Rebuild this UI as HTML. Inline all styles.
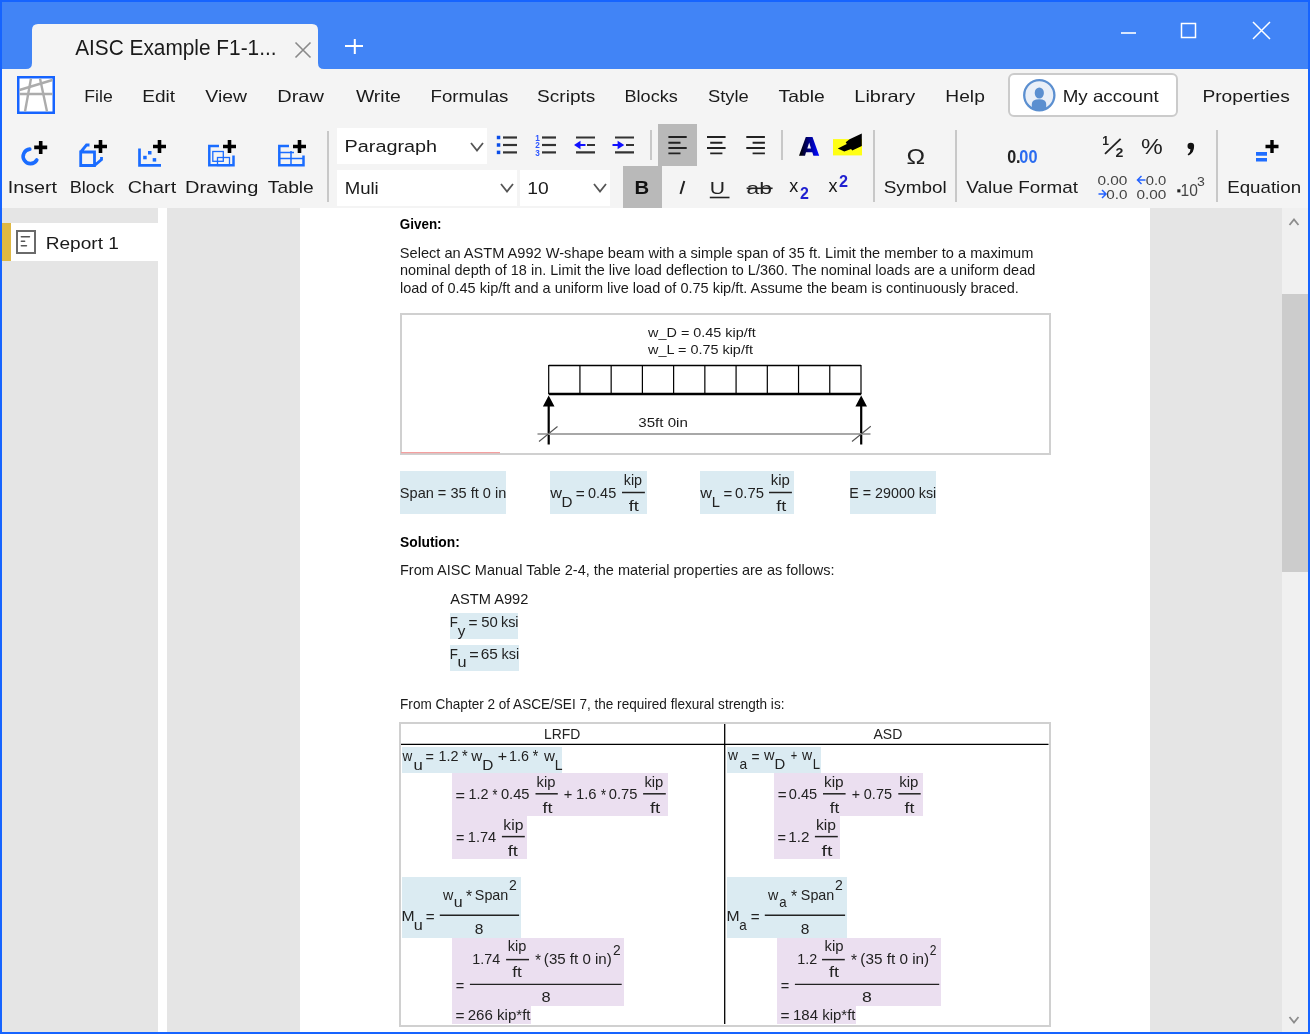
<!DOCTYPE html>
<html><head><meta charset="utf-8"><title>AISC Example F1-1</title>
<style>
html,body{margin:0;padding:0}
body{width:1310px;height:1034px;overflow:hidden;background:#1664ff;position:relative;font-family:"Liberation Sans",sans-serif}
.a{position:absolute;box-sizing:content-box}
svg{position:absolute;left:0;top:0;will-change:transform}
text{font-family:"Liberation Sans",sans-serif}
</style></head><body>
<div class="a" style="left:2px;top:2px;width:1306px;height:67px;background:#4184f6;"></div>
<div class="a" style="left:2px;top:69px;width:1306px;height:139px;background:#f4f4f4;"></div>
<div class="a" style="left:2px;top:208px;width:1306px;height:824px;background:#e5e5e5;"></div>
<div class="a" style="left:158px;top:208px;width:9px;height:824px;background:#ffffff;"></div>
<div class="a" style="left:300px;top:208px;width:850px;height:824px;background:#ffffff;"></div>
<div class="a" style="left:1282px;top:208px;width:26px;height:824px;background:#f0f0f0;"></div>
<div class="a" style="left:1282px;top:294px;width:26px;height:278px;background:#cccccc;"></div>
<div class="a" style="left:1008px;top:73px;width:166px;height:40px;border:2px solid #cbcbcb;border-radius:6px;background:#fff"></div>
<div class="a" style="left:327px;top:131px;width:2px;height:71px;background:#c8c8c8;"></div>
<div class="a" style="left:650px;top:130px;width:2px;height:30px;background:#c8c8c8;"></div>
<div class="a" style="left:781px;top:130px;width:2px;height:30px;background:#c8c8c8;"></div>
<div class="a" style="left:873px;top:130px;width:2px;height:72px;background:#c8c8c8;"></div>
<div class="a" style="left:955px;top:130px;width:2px;height:72px;background:#c8c8c8;"></div>
<div class="a" style="left:1216px;top:130px;width:2px;height:72px;background:#c8c8c8;"></div>
<div class="a" style="left:337px;top:128px;width:150px;height:36px;background:#ffffff;"></div>
<div class="a" style="left:337px;top:170px;width:180px;height:36px;background:#ffffff;"></div>
<div class="a" style="left:520px;top:170px;width:90px;height:36px;background:#ffffff;"></div>
<div class="a" style="left:658px;top:124px;width:39px;height:42px;background:#b9b9b9;"></div>
<div class="a" style="left:623px;top:166px;width:39px;height:42px;background:#b9b9b9;"></div>
<div class="a" style="left:2px;top:223px;width:156px;height:38px;background:#ffffff;"></div>
<div class="a" style="left:2px;top:223px;width:9px;height:38px;background:#dfb843;"></div>
<div class="a" style="left:400px;top:313px;width:647px;height:138px;border:2px solid #d0d0d0;background:#fff"></div>
<div class="a" style="left:400px;top:471px;width:106px;height:43px;background:#dbebf2;"></div>
<div class="a" style="left:550px;top:471px;width:97px;height:43px;background:#dbebf2;"></div>
<div class="a" style="left:700px;top:471px;width:94px;height:43px;background:#dbebf2;"></div>
<div class="a" style="left:850px;top:471px;width:86px;height:43px;background:#dbebf2;"></div>
<div class="a" style="left:450px;top:613px;width:68px;height:26px;background:#dbebf2;"></div>
<div class="a" style="left:450px;top:645px;width:69px;height:26px;background:#dbebf2;"></div>
<div class="a" style="left:399px;top:722px;width:648px;height:301px;border:2px solid #d0d0d0;background:#fff"></div>
<div class="a" style="left:402px;top:747px;width:160px;height:26px;background:#dbebf2;"></div>
<div class="a" style="left:452px;top:773px;width:216px;height:43px;background:#ebdff0;"></div>
<div class="a" style="left:452px;top:816px;width:75px;height:43px;background:#ebdff0;"></div>
<div class="a" style="left:727px;top:747px;width:94px;height:26px;background:#dbebf2;"></div>
<div class="a" style="left:774px;top:773px;width:149px;height:43px;background:#ebdff0;"></div>
<div class="a" style="left:774px;top:816px;width:66px;height:43px;background:#ebdff0;"></div>
<div class="a" style="left:402px;top:877px;width:119px;height:61px;background:#dbebf2;"></div>
<div class="a" style="left:727px;top:877px;width:120px;height:61px;background:#dbebf2;"></div>
<div class="a" style="left:452px;top:938px;width:172px;height:68px;background:#ebdff0;"></div>
<div class="a" style="left:452px;top:1006px;width:79px;height:18px;background:#ebdff0;"></div>
<div class="a" style="left:777px;top:938px;width:164px;height:68px;background:#ebdff0;"></div>
<div class="a" style="left:777px;top:1006px;width:79px;height:18px;background:#ebdff0;"></div>
<svg width="1310" height="1034" viewBox="0 0 1310 1034">
<path d="M26,69 Q32,69 32,63 L32,30 Q32,24 38,24 L312,24 Q318,24 318,30 L318,63 Q318,69 324,69 Z" fill="#f4f4f4"/>
<text x="75.16" y="55.00" font-size="21.5" fill="#1a1a1a" textLength="201.34" lengthAdjust="spacingAndGlyphs">AISC Example F1-1...</text>
<path d="M295.5,42.5 L310.5,57.5 M310.5,42.5 L295.5,57.5" stroke="#8a8a8a" stroke-width="1.6" fill="none"/>
<path d="M345,46 L363,46 M354.8,39 L354.8,54" stroke="#ffffff" stroke-width="2" fill="none"/>
<path d="M1121,33 L1136,33" stroke="#fff" stroke-width="1.6"/>
<rect x="1181.5" y="23.5" width="14" height="14" stroke="#fff" stroke-width="1.5" fill="none"/>
<path d="M1253,22 L1270,39 M1270,22 L1253,39" stroke="#fff" stroke-width="1.5" fill="none"/>
<rect x="18.25" y="77.25" width="35.5" height="35.5" fill="#ffffff" stroke="#1664ff" stroke-width="2.5"/>
<g stroke="#acacac" stroke-width="2.4" fill="none"><path d="M19.5,90 L52.5,80"/><path d="M19.5,94 L52.5,94"/><path d="M31,78.5 L25,111.5"/><path d="M40,78.5 L47,111.5"/></g>
<text x="84.35" y="102.00" font-size="16.5" fill="#1a1a1a" textLength="28.43" lengthAdjust="spacingAndGlyphs">File</text>
<text x="142.34" y="102.00" font-size="16.5" fill="#1a1a1a" textLength="32.80" lengthAdjust="spacingAndGlyphs">Edit</text>
<text x="205.32" y="102.00" font-size="16.5" fill="#1a1a1a" textLength="41.64" lengthAdjust="spacingAndGlyphs">View</text>
<text x="277.26" y="102.00" font-size="16.5" fill="#1a1a1a" textLength="46.69" lengthAdjust="spacingAndGlyphs">Draw</text>
<text x="355.92" y="102.00" font-size="16.5" fill="#1a1a1a" textLength="44.94" lengthAdjust="spacingAndGlyphs">Write</text>
<text x="430.57" y="102.00" font-size="16.5" fill="#1a1a1a" textLength="77.81" lengthAdjust="spacingAndGlyphs">Formulas</text>
<text x="537.14" y="102.00" font-size="16.5" fill="#1a1a1a" textLength="58.15" lengthAdjust="spacingAndGlyphs">Scripts</text>
<text x="624.52" y="102.00" font-size="16.5" fill="#1a1a1a" textLength="53.24" lengthAdjust="spacingAndGlyphs">Blocks</text>
<text x="707.97" y="102.00" font-size="16.5" fill="#1a1a1a" textLength="40.85" lengthAdjust="spacingAndGlyphs">Style</text>
<text x="778.58" y="102.00" font-size="16.5" fill="#1a1a1a" textLength="46.24" lengthAdjust="spacingAndGlyphs">Table</text>
<text x="854.37" y="102.00" font-size="16.5" fill="#1a1a1a" textLength="60.77" lengthAdjust="spacingAndGlyphs">Library</text>
<text x="945.33" y="102.00" font-size="16.5" fill="#1a1a1a" textLength="39.48" lengthAdjust="spacingAndGlyphs">Help</text>
<text x="1202.43" y="102.00" font-size="16.5" fill="#1a1a1a" textLength="87.37" lengthAdjust="spacingAndGlyphs">Properties</text>
<clipPath id="avc"><circle cx="1039.3" cy="95.2" r="15"/></clipPath>
<circle cx="1039.3" cy="95.2" r="15.1" fill="#e9eff8" stroke="#5b8fd0" stroke-width="2.3"/>
<g clip-path="url(#avc)" fill="#5b8fd0"><ellipse cx="1039.3" cy="93" rx="4.6" ry="5.5"/><path d="M1031.8,112 L1031.8,104 Q1031.8,99.2 1039.3,99.2 Q1046.2,99.2 1046.2,104 L1046.2,112 Z"/></g>
<text x="1062.66" y="102.00" font-size="16.5" fill="#1a1a1a" textLength="95.98" lengthAdjust="spacingAndGlyphs">My account</text>
<text x="7.67" y="193.00" font-size="17" fill="#1a1a1a" textLength="49.47" lengthAdjust="spacingAndGlyphs">Insert</text>
<text x="69.82" y="193.00" font-size="17" fill="#1a1a1a" textLength="44.15" lengthAdjust="spacingAndGlyphs">Block</text>
<text x="127.80" y="193.00" font-size="17" fill="#1a1a1a" textLength="48.35" lengthAdjust="spacingAndGlyphs">Chart</text>
<text x="184.96" y="193.00" font-size="17" fill="#1a1a1a" textLength="73.33" lengthAdjust="spacingAndGlyphs">Drawing</text>
<text x="267.89" y="193.00" font-size="17" fill="#1a1a1a" textLength="45.93" lengthAdjust="spacingAndGlyphs">Table</text>
<text x="883.74" y="193.00" font-size="17" fill="#1a1a1a" textLength="63.02" lengthAdjust="spacingAndGlyphs">Symbol</text>
<text x="966.32" y="193.00" font-size="17" fill="#1a1a1a" textLength="111.72" lengthAdjust="spacingAndGlyphs">Value Format</text>
<text x="1227.16" y="193.00" font-size="17" fill="#1a1a1a" textLength="73.95" lengthAdjust="spacingAndGlyphs">Equation</text>
<text x="344.57" y="152.00" font-size="16.3" fill="#1a1a1a" textLength="92.51" lengthAdjust="spacingAndGlyphs">Paragraph</text>
<text x="344.68" y="194.00" font-size="16.5" fill="#1a1a1a" textLength="34.08" lengthAdjust="spacingAndGlyphs">Muli</text>
<text x="527.33" y="193.80" font-size="16.5" fill="#1a1a1a" textLength="21.42" lengthAdjust="spacingAndGlyphs">10</text>
<path d="M471,143 L477,150.5 L483,143" stroke="#555" stroke-width="1.8" fill="none"/>
<path d="M501,184 L507,191.5 L513,184" stroke="#555" stroke-width="1.8" fill="none"/>
<path d="M594,184 L600,191.5 L606,184" stroke="#555" stroke-width="1.8" fill="none"/>
<rect x="17" y="231" width="18" height="22" fill="none" stroke="#6a6a6a" stroke-width="2"/>
<g stroke="#555" stroke-width="1.4" stroke-linecap="round"><path d="M21.3,236.7 L29.5,236.7"/><path d="M21.3,241.3 L24.7,241.3"/><path d="M21.3,245.7 L26.5,245.7"/></g>
<text x="45.73" y="249.00" font-size="17" fill="#1a1a1a" textLength="73.20" lengthAdjust="spacingAndGlyphs">Report 1</text>
<text x="399.85" y="228.80" font-size="14" font-weight="bold" fill="#000" textLength="41.74" lengthAdjust="spacingAndGlyphs">Given:</text>
<text x="399.84" y="257.70" font-size="14.5" fill="#1a1a1a" textLength="633.52" lengthAdjust="spacingAndGlyphs">Select an ASTM A992 W-shape beam with a simple span of 35 ft. Limit the member to a maximum</text>
<text x="399.94" y="275.10" font-size="14.5" fill="#1a1a1a" textLength="635.29" lengthAdjust="spacingAndGlyphs">nominal depth of 18 in. Limit the live load deflection to L/360. The nominal loads are a uniform dead</text>
<text x="399.92" y="292.50" font-size="14.5" fill="#1a1a1a" textLength="619.00" lengthAdjust="spacingAndGlyphs">load of 0.45 kip/ft and a uniform live load of 0.75 kip/ft. Assume the beam is continuously braced.</text>
<text x="400.00" y="546.80" font-size="14" font-weight="bold" fill="#000" textLength="59.83" lengthAdjust="spacingAndGlyphs">Solution:</text>
<text x="400.02" y="575.20" font-size="14.5" fill="#1a1a1a" textLength="434.50" lengthAdjust="spacingAndGlyphs">From AISC Manual Table 2-4, the material properties are as follows:</text>
<text x="450.27" y="603.90" font-size="14.5" fill="#1a1a1a" textLength="78.06" lengthAdjust="spacingAndGlyphs">ASTM A992</text>
<text x="400.09" y="708.60" font-size="14.5" fill="#1a1a1a" textLength="384.35" lengthAdjust="spacingAndGlyphs">From Chapter 2 of ASCE/SEI 7, the required flexural strength is:</text>
<path d="M29.8,149.1 A7.3,7.3 0 1 0 36.8,160" stroke="#1a6cff" stroke-width="3.6" fill="none" stroke-linecap="round"/>
<path d="M34.2,147.4 L47.2,147.4 M40.7,140.9 L40.7,153.9" stroke="#000" stroke-width="3.6" fill="none"/>
<path d="M80.7,165.5 L80.7,152 L94.5,152 L94.5,165.5 Z M80.7,152 L86.5,145 L89.5,145 M94.5,165.5 L101.5,159.5 L101.5,157" stroke="#1a6cff" stroke-width="2.8" fill="none" stroke-linejoin="miter"/>
<path d="M94.0,146.5 L107.0,146.5 M100.5,140.0 L100.5,153.0" stroke="#000" stroke-width="3.6" fill="none"/>
<path d="M139.5,148.5 L139.5,165.4 L161,165.4" stroke="#1a6cff" stroke-width="2.7" fill="none"/>
<rect x="143.2" y="155.8" width="3.5" height="3.5" fill="#1a6cff"/><rect x="148" y="151" width="3.5" height="3.5" fill="#1a6cff"/><rect x="152.7" y="158.1" width="3.5" height="3.5" fill="#1a6cff"/>
<path d="M153.0,146.5 L166.0,146.5 M159.5,140.0 L159.5,153.0" stroke="#000" stroke-width="3.6" fill="none"/>
<path d="M219,146 L209.3,146 L209.3,165.3 L233.5,165.3 L233.5,155.6" stroke="#1a6cff" stroke-width="2.5" fill="none"/>
<rect x="212.8" y="151.5" width="10.5" height="9.8" stroke="#1a6cff" stroke-width="1.3" fill="none"/><rect x="217.5" y="157.5" width="12" height="8" stroke="#1a6cff" stroke-width="1.3" fill="none"/>
<path d="M223.0,146.5 L236.0,146.5 M229.5,140.0 L229.5,153.0" stroke="#000" stroke-width="3.6" fill="none"/>
<path d="M289,146 L279.3,146 L279.3,165.3 L303.5,165.3 L303.5,155.6" stroke="#1a6cff" stroke-width="2.5" fill="none"/>
<path d="M280,152.6 L294,152.6 M280,158.4 L303,158.4 M291,151 L291,165" stroke="#1a6cff" stroke-width="1.5" fill="none"/>
<path d="M293.0,146.5 L306.0,146.5 M299.5,140.0 L299.5,153.0" stroke="#000" stroke-width="3.6" fill="none"/>
<rect x="496.8" y="135.75" width="3.5" height="3.5" fill="#0a4de8"/>
<path d="M503,137.5 L517,137.5" stroke="#333" stroke-width="2.2"/>
<rect x="496.8" y="143.25" width="3.5" height="3.5" fill="#0a4de8"/>
<path d="M503,145 L517,145" stroke="#333" stroke-width="2.2"/>
<rect x="496.8" y="150.65" width="3.5" height="3.5" fill="#0a4de8"/>
<path d="M503,152.4 L517,152.4" stroke="#333" stroke-width="2.2"/>
<text x="535.3" y="140.6" font-size="8.2" font-weight="bold" fill="#2d55ff">1</text>
<path d="M542,137.5 L556,137.5" stroke="#333" stroke-width="2.2"/>
<text x="535.3" y="148.1" font-size="8.2" font-weight="bold" fill="#2d55ff">2</text>
<path d="M542,145 L556,145" stroke="#333" stroke-width="2.2"/>
<text x="535.3" y="155.5" font-size="8.2" font-weight="bold" fill="#2d55ff">3</text>
<path d="M542,152.4 L556,152.4" stroke="#333" stroke-width="2.2"/>
<path d="M576,137.5 L595,137.5 M587,145 L595,145 M576,152.4 L595,152.4" stroke="#333" stroke-width="2.2"/>
<path d="M574,145 L580.5,140.8 L580.5,149.2 Z" fill="#1010ff"/><path d="M580,145 L585.5,145" stroke="#1010ff" stroke-width="2"/>
<path d="M615,137.5 L634,137.5 M626,145 L634,145 M615,152.4 L634,152.4" stroke="#333" stroke-width="2.2"/>
<path d="M624.3,145 L617.6,140.8 L617.6,149.2 Z" fill="#1010ff"/><path d="M612.5,145 L618,145" stroke="#1010ff" stroke-width="2"/>
<path d="M668.4,137 L686.7,137 M668.4,142.7 L680.5,142.7 M668.4,148 L686.7,148 M668.4,153.4 L680.5,153.4" stroke="#222" stroke-width="1.9"/>
<path d="M707.0,137 L725.6,137 M710.2,142.7 L722.4,142.7 M707.0,148 L725.6,148 M710.2,153.4 L722.4,153.4" stroke="#222" stroke-width="1.9"/>
<path d="M746.3,137 L764.9,137 M752.6,142.7 L764.9,142.7 M746.3,148 L764.9,148 M752.6,153.4 L764.9,153.4" stroke="#222" stroke-width="1.9"/>
<defs><linearGradient id="ga" x1="0" y1="0" x2="1" y2="0"><stop offset="0.05" stop-color="#000"/><stop offset="0.45" stop-color="#00007a"/><stop offset="0.95" stop-color="#0008ff"/></linearGradient></defs>
<path d="M799,155.7 L805.8,137.1 L812.5,137.1 L819.2,155.7 L813.4,155.7 L812.3,152.2 L806,152.2 L805,155.7 Z M807.3,148.6 L811,148.6 L809.2,142.6 Z" fill="url(#ga)" fill-rule="evenodd"/>
<rect x="833" y="139.1" width="29" height="16.3" fill="#ffff14"/>
<path d="M861.8,133.4 L861.8,146.1 L852.2,150.4 L851.1,149 L844.3,151.5 L837.8,148.4 L846.8,144.1 L845.7,142.2 L849.6,139.3 Z" fill="#000"/>
<text x="634.64" y="194.00" font-size="18.5" font-weight="bold" fill="#111" textLength="14.68" lengthAdjust="spacingAndGlyphs">B</text>
<path d="M684.3,181 L680.5,194" stroke="#222" stroke-width="2"/>
<text x="709.87" y="194.00" font-size="17" fill="#222" textLength="15.26" lengthAdjust="spacingAndGlyphs">U</text>
<path d="M709.8,197.5 L729.5,197.5" stroke="#222" stroke-width="1.6"/>
<text x="746.53" y="194.00" font-size="17" fill="#222" textLength="25.43" lengthAdjust="spacingAndGlyphs">ab</text>
<path d="M746.6,188.3 L772.6,188.3" stroke="#222" stroke-width="1.6"/>
<text x="789.30" y="192.40" font-size="19" fill="#151515" textLength="9.00" lengthAdjust="spacingAndGlyphs">x</text>
<text x="799.95" y="199.10" font-size="16" font-weight="bold" fill="#2020d0" textLength="8.89" lengthAdjust="spacingAndGlyphs">2</text>
<text x="828.50" y="192.40" font-size="19" fill="#151515" textLength="9.00" lengthAdjust="spacingAndGlyphs">x</text>
<text x="838.94" y="187.10" font-size="16" font-weight="bold" fill="#2020d0" textLength="9.01" lengthAdjust="spacingAndGlyphs">2</text>
<text x="906.44" y="163.50" font-size="22" fill="#222" textLength="18.63" lengthAdjust="spacingAndGlyphs">Ω</text>
<text x="1007.16" y="162.50" font-size="18" font-weight="bold" fill="#222" textLength="13.45" lengthAdjust="spacingAndGlyphs">0.</text>
<text x="1019.36" y="162.50" font-size="18" font-weight="bold" fill="#2b6cf0" textLength="18.11" lengthAdjust="spacingAndGlyphs">00</text>
<text x="1102.24" y="144.60" font-size="12" font-weight="bold" fill="#222" textLength="6.69" lengthAdjust="spacingAndGlyphs">1</text>
<path d="M1105,153.9 L1120.6,138.9" stroke="#222" stroke-width="1.8"/>
<text x="1115.51" y="156.60" font-size="12" font-weight="bold" fill="#222" textLength="7.86" lengthAdjust="spacingAndGlyphs">2</text>
<text x="1140.93" y="154.40" font-size="22" fill="#222" textLength="21.74" lengthAdjust="spacingAndGlyphs">%</text>
<circle cx="1190.8" cy="146" r="3.3" fill="#111"/><path d="M1194,146.5 Q1194.2,152.5 1188.6,155.6 L1187.6,154.4 Q1190.8,151.8 1190.6,148.5 Z" fill="#111"/>
<text x="1097.40" y="184.90" font-size="12.5" fill="#444" textLength="30.00" lengthAdjust="spacingAndGlyphs">0.00</text>
<path d="M1098.5,194 L1105.5,194 M1102,190 L1106,194 L1102,198" stroke="#2563ff" stroke-width="1.5" fill="none"/>
<text x="1106.20" y="198.60" font-size="12.5" fill="#444" textLength="21.19" lengthAdjust="spacingAndGlyphs">0.0</text>
<path d="M1137.5,180 L1145.5,180 M1141.5,176 L1137.5,180 L1141.5,184" stroke="#2563ff" stroke-width="1.5" fill="none"/>
<text x="1145.72" y="184.60" font-size="12.5" fill="#444" textLength="20.56" lengthAdjust="spacingAndGlyphs">0.0</text>
<text x="1136.40" y="198.60" font-size="12.5" fill="#444" textLength="29.90" lengthAdjust="spacingAndGlyphs">0.00</text>
<rect x="1177.3" y="189.3" width="3.1" height="3.1" fill="#222"/>
<text x="1180.52" y="195.50" font-size="16" fill="#444" textLength="17.29" lengthAdjust="spacingAndGlyphs">10</text>
<text x="1197.06" y="186.20" font-size="12" fill="#444" textLength="7.86" lengthAdjust="spacingAndGlyphs">3</text>
<path d="M1256,153.9 L1267,153.9 M1256,159.8 L1267,159.8" stroke="#1f6dff" stroke-width="3.6"/>
<path d="M1265.5,146.5 L1278.5,146.5 M1272,140.0 L1272,153.0" stroke="#000" stroke-width="3.4" fill="none"/>
<path d="M1289.5,225 L1294,219.5 L1298.5,225" stroke="#8c8c8c" stroke-width="1.8" fill="none"/>
<path d="M1289.5,1017 L1294,1022.5 L1298.5,1017" stroke="#8c8c8c" stroke-width="1.8" fill="none"/>
<g stroke="#000" fill="none">
<path d="M548.7,365.5 L861,365.5" stroke-width="1.4"/>
<path d="M548.70,365 L548.70,394 M579.93,365 L579.93,394 M611.16,365 L611.16,394 M642.39,365 L642.39,394 M673.62,365 L673.62,394 M704.85,365 L704.85,394 M736.08,365 L736.08,394 M767.31,365 L767.31,394 M798.54,365 L798.54,394 M829.77,365 L829.77,394 M861.00,365 L861.00,394" stroke-width="1.2"/>
<path d="M548.7,394 L861.2,394" stroke-width="2.4"/>
<path d="M548.7,402 L548.7,444.5 M861.2,402 L861.2,444.5" stroke-width="2.2"/>
</g>
<path d="M548.7,395.5 L554.5,406.5 L542.9,406.5 Z M861.2,395.5 L867,406.5 L855.4,406.5 Z" fill="#000"/>
<path d="M537.5,434 L870.5,434" stroke="#a8a8a8" stroke-width="2"/>
<path d="M539,441.5 L557.5,426.5 M852,441.5 L870.8,426.3" stroke="#555" stroke-width="1.1"/>
<path d="M401,452.6 L500,452.6" stroke="#f4a0a0" stroke-width="1.2"/>
<text x="648.12" y="336.90" font-size="13.5" fill="#1a1a1a" textLength="107.58" lengthAdjust="spacingAndGlyphs">w_D = 0.45 kip/ft</text>
<text x="648.12" y="354.00" font-size="13.5" fill="#1a1a1a" textLength="104.78" lengthAdjust="spacingAndGlyphs">w_L = 0.75 kip/ft</text>
<text x="638.32" y="426.80" font-size="13.5" fill="#1a1a1a" textLength="49.56" lengthAdjust="spacingAndGlyphs">35ft 0in</text>
<text x="399.84" y="498.00" font-size="14.5" fill="#222" textLength="106.41" lengthAdjust="spacingAndGlyphs">Span = 35 ft 0 in</text>
<text x="550.32" y="497.90" font-size="14.5" fill="#222" textLength="11.74" lengthAdjust="spacingAndGlyphs">w</text>
<text x="561.45" y="507.00" font-size="14.5" fill="#222" textLength="10.97" lengthAdjust="spacingAndGlyphs">D</text>
<text x="575.65" y="499.10" font-size="14.5" fill="#222" textLength="9.02" lengthAdjust="spacingAndGlyphs">=</text>
<text x="588.03" y="497.90" font-size="14.5" fill="#222" textLength="28.17" lengthAdjust="spacingAndGlyphs">0.45</text>
<text x="623.73" y="484.90" font-size="14.5" fill="#222" textLength="18.37" lengthAdjust="spacingAndGlyphs">kip</text>
<path d="M622,492.5 L644.9,492.5" stroke="#222" stroke-width="1.5"/>
<text x="628.84" y="510.50" font-size="14.5" fill="#222" textLength="10.09" lengthAdjust="spacingAndGlyphs">ft</text>
<text x="700.32" y="497.90" font-size="14.5" fill="#222" textLength="11.74" lengthAdjust="spacingAndGlyphs">w</text>
<text x="711.69" y="507.00" font-size="14.5" fill="#222" textLength="8.20" lengthAdjust="spacingAndGlyphs">L</text>
<text x="723.57" y="499.10" font-size="14.5" fill="#222" textLength="8.77" lengthAdjust="spacingAndGlyphs">=</text>
<text x="735.02" y="497.90" font-size="14.5" fill="#222" textLength="28.90" lengthAdjust="spacingAndGlyphs">0.75</text>
<text x="770.69" y="484.90" font-size="14.5" fill="#222" textLength="19.14" lengthAdjust="spacingAndGlyphs">kip</text>
<path d="M769,492.5 L791.9,492.5" stroke="#222" stroke-width="1.5"/>
<text x="776.35" y="510.50" font-size="14.5" fill="#222" textLength="9.99" lengthAdjust="spacingAndGlyphs">ft</text>
<text x="849.33" y="498.00" font-size="14.5" fill="#222" textLength="86.93" lengthAdjust="spacingAndGlyphs">E = 29000 ksi</text>
<text x="449.71" y="626.80" font-size="14.5" fill="#222" textLength="8.12" lengthAdjust="spacingAndGlyphs">F</text>
<text x="457.86" y="635.50" font-size="14.5" fill="#222" textLength="7.57" lengthAdjust="spacingAndGlyphs">y</text>
<text x="468.45" y="628.00" font-size="14.5" fill="#222" textLength="9.02" lengthAdjust="spacingAndGlyphs">=</text>
<text x="481.20" y="626.80" font-size="14.5" fill="#222" textLength="16.58" lengthAdjust="spacingAndGlyphs">50</text>
<text x="500.93" y="626.80" font-size="14.5" fill="#222" textLength="17.65" lengthAdjust="spacingAndGlyphs">ksi</text>
<text x="449.71" y="658.70" font-size="14.5" fill="#222" textLength="8.12" lengthAdjust="spacingAndGlyphs">F</text>
<text x="457.45" y="666.90" font-size="14.5" fill="#222" textLength="9.03" lengthAdjust="spacingAndGlyphs">u</text>
<text x="469.31" y="659.90" font-size="14.5" fill="#222" textLength="9.50" lengthAdjust="spacingAndGlyphs">=</text>
<text x="480.72" y="658.70" font-size="14.5" fill="#222" textLength="17.13" lengthAdjust="spacingAndGlyphs">65</text>
<text x="501.53" y="658.70" font-size="14.5" fill="#222" textLength="17.65" lengthAdjust="spacingAndGlyphs">ksi</text>
<path d="M401,744.3 L1048.5,744.3" stroke="#000" stroke-width="1.2"/>
<path d="M724.7,724 L724.7,1024" stroke="#000" stroke-width="1.3"/>
<text x="544.06" y="739.00" font-size="14.5" fill="#222" textLength="36.31" lengthAdjust="spacingAndGlyphs">LRFD</text>
<text x="873.47" y="738.60" font-size="14.5" fill="#222" textLength="28.80" lengthAdjust="spacingAndGlyphs">ASD</text>
<text x="402.52" y="760.60" font-size="14.5" fill="#222" textLength="9.75" lengthAdjust="spacingAndGlyphs">w</text>
<text x="413.51" y="769.70" font-size="14.5" fill="#222" textLength="9.30" lengthAdjust="spacingAndGlyphs">u</text>
<text x="425.60" y="761.80" font-size="14.5" fill="#222" textLength="8.41" lengthAdjust="spacingAndGlyphs">=</text>
<text x="438.40" y="760.60" font-size="14.5" fill="#222" textLength="20.02" lengthAdjust="spacingAndGlyphs">1.2</text>
<text x="461.97" y="762.40" font-size="17" fill="#222" textLength="5.66" lengthAdjust="spacingAndGlyphs">*</text>
<text x="471.32" y="760.60" font-size="14.5" fill="#222" textLength="10.94" lengthAdjust="spacingAndGlyphs">w</text>
<text x="482.34" y="769.70" font-size="14.5" fill="#222" textLength="11.10" lengthAdjust="spacingAndGlyphs">D</text>
<text x="497.82" y="760.60" font-size="14.5" fill="#222" textLength="9.38" lengthAdjust="spacingAndGlyphs">+</text>
<text x="509.11" y="760.60" font-size="14.5" fill="#222" textLength="19.92" lengthAdjust="spacingAndGlyphs">1.6</text>
<text x="532.77" y="762.40" font-size="17" fill="#222" textLength="5.44" lengthAdjust="spacingAndGlyphs">*</text>
<text x="544.02" y="760.60" font-size="14.5" fill="#222" textLength="10.94" lengthAdjust="spacingAndGlyphs">w</text>
<text x="554.85" y="769.70" font-size="14.5" fill="#222" textLength="7.82" lengthAdjust="spacingAndGlyphs">L</text>
<text x="455.41" y="800.60" font-size="14.5" fill="#222" textLength="9.50" lengthAdjust="spacingAndGlyphs">=</text>
<text x="468.50" y="799.40" font-size="14.5" fill="#222" textLength="20.02" lengthAdjust="spacingAndGlyphs">1.2</text>
<text x="492.60" y="801.20" font-size="17" fill="#222" textLength="4.90" lengthAdjust="spacingAndGlyphs">*</text>
<text x="500.93" y="799.40" font-size="14.5" fill="#222" textLength="28.59" lengthAdjust="spacingAndGlyphs">0.45</text>
<text x="563.79" y="799.40" font-size="14.5" fill="#222" textLength="8.53" lengthAdjust="spacingAndGlyphs">+</text>
<text x="575.97" y="799.40" font-size="14.5" fill="#222" textLength="20.58" lengthAdjust="spacingAndGlyphs">1.6</text>
<text x="600.89" y="801.20" font-size="17" fill="#222" textLength="5.01" lengthAdjust="spacingAndGlyphs">*</text>
<text x="608.73" y="799.40" font-size="14.5" fill="#222" textLength="28.59" lengthAdjust="spacingAndGlyphs">0.75</text>
<text x="536.61" y="787.10" font-size="14.5" fill="#222" textLength="18.81" lengthAdjust="spacingAndGlyphs">kip</text>
<path d="M535.5,793.8 L557.8,793.8" stroke="#222" stroke-width="1.5"/>
<text x="542.45" y="812.80" font-size="14.5" fill="#222" textLength="9.99" lengthAdjust="spacingAndGlyphs">ft</text>
<text x="644.40" y="787.10" font-size="14.5" fill="#222" textLength="18.92" lengthAdjust="spacingAndGlyphs">kip</text>
<path d="M643.1,793.8 L665.8,793.8" stroke="#222" stroke-width="1.5"/>
<text x="649.93" y="812.80" font-size="14.5" fill="#222" textLength="10.40" lengthAdjust="spacingAndGlyphs">ft</text>
<text x="456.00" y="843.40" font-size="14.5" fill="#222" textLength="8.41" lengthAdjust="spacingAndGlyphs">=</text>
<text x="467.79" y="842.20" font-size="14.5" fill="#222" textLength="28.44" lengthAdjust="spacingAndGlyphs">1.74</text>
<text x="503.35" y="829.90" font-size="14.5" fill="#222" textLength="20.01" lengthAdjust="spacingAndGlyphs">kip</text>
<path d="M501.9,836.6 L524.8,836.6" stroke="#222" stroke-width="1.5"/>
<text x="507.74" y="855.50" font-size="14.5" fill="#222" textLength="10.19" lengthAdjust="spacingAndGlyphs">ft</text>
<text x="728.02" y="760.30" font-size="14.5" fill="#222" textLength="9.95" lengthAdjust="spacingAndGlyphs">w</text>
<text x="739.41" y="769.40" font-size="14.5" fill="#222" textLength="7.69" lengthAdjust="spacingAndGlyphs">a</text>
<text x="751.53" y="761.50" font-size="14.5" fill="#222" textLength="8.05" lengthAdjust="spacingAndGlyphs">=</text>
<text x="764.02" y="760.30" font-size="14.5" fill="#222" textLength="10.54" lengthAdjust="spacingAndGlyphs">w</text>
<text x="774.48" y="769.40" font-size="14.5" fill="#222" textLength="10.73" lengthAdjust="spacingAndGlyphs">D</text>
<text x="790.86" y="760.30" font-size="14.5" fill="#222" textLength="6.49" lengthAdjust="spacingAndGlyphs">+</text>
<text x="802.12" y="760.30" font-size="14.5" fill="#222" textLength="10.15" lengthAdjust="spacingAndGlyphs">w</text>
<text x="812.82" y="769.40" font-size="14.5" fill="#222" textLength="7.32" lengthAdjust="spacingAndGlyphs">L</text>
<text x="777.66" y="800.40" font-size="14.5" fill="#222" textLength="8.89" lengthAdjust="spacingAndGlyphs">=</text>
<text x="788.83" y="799.20" font-size="14.5" fill="#222" textLength="28.38" lengthAdjust="spacingAndGlyphs">0.45</text>
<text x="851.81" y="799.20" font-size="14.5" fill="#222" textLength="8.29" lengthAdjust="spacingAndGlyphs">+</text>
<text x="863.83" y="799.20" font-size="14.5" fill="#222" textLength="28.17" lengthAdjust="spacingAndGlyphs">0.75</text>
<text x="823.96" y="787.10" font-size="14.5" fill="#222" textLength="19.68" lengthAdjust="spacingAndGlyphs">kip</text>
<path d="M823,793.8 L845.6,793.8" stroke="#222" stroke-width="1.5"/>
<text x="829.76" y="812.80" font-size="14.5" fill="#222" textLength="9.57" lengthAdjust="spacingAndGlyphs">ft</text>
<text x="899.29" y="787.10" font-size="14.5" fill="#222" textLength="19.14" lengthAdjust="spacingAndGlyphs">kip</text>
<path d="M898.3,793.8 L920.7,793.8" stroke="#222" stroke-width="1.5"/>
<text x="904.55" y="812.80" font-size="14.5" fill="#222" textLength="9.88" lengthAdjust="spacingAndGlyphs">ft</text>
<text x="777.49" y="843.40" font-size="14.5" fill="#222" textLength="8.53" lengthAdjust="spacingAndGlyphs">=</text>
<text x="788.34" y="842.20" font-size="14.5" fill="#222" textLength="21.23" lengthAdjust="spacingAndGlyphs">1.2</text>
<text x="815.95" y="829.90" font-size="14.5" fill="#222" textLength="20.01" lengthAdjust="spacingAndGlyphs">kip</text>
<path d="M814.9,836.6 L837.8,836.6" stroke="#222" stroke-width="1.5"/>
<text x="821.62" y="855.50" font-size="14.5" fill="#222" textLength="10.82" lengthAdjust="spacingAndGlyphs">ft</text>
<text x="401.51" y="920.50" font-size="14.5" fill="#222" textLength="13.08" lengthAdjust="spacingAndGlyphs">M</text>
<text x="413.65" y="929.50" font-size="14.5" fill="#222" textLength="9.03" lengthAdjust="spacingAndGlyphs">u</text>
<text x="425.76" y="921.70" font-size="14.5" fill="#222" textLength="8.89" lengthAdjust="spacingAndGlyphs">=</text>
<path d="M439.8,915.3 L519.1,915.3" stroke="#222" stroke-width="1.4"/>
<text x="443.12" y="899.70" font-size="14.5" fill="#222" textLength="10.34" lengthAdjust="spacingAndGlyphs">w</text>
<text x="453.66" y="907.20" font-size="14.5" fill="#222" textLength="8.90" lengthAdjust="spacingAndGlyphs">u</text>
<text x="466.05" y="901.50" font-size="17" fill="#222" textLength="6.10" lengthAdjust="spacingAndGlyphs">*</text>
<text x="474.85" y="899.70" font-size="14.5" fill="#222" textLength="33.48" lengthAdjust="spacingAndGlyphs">Span</text>
<text x="509.09" y="890.20" font-size="14.5" fill="#222" textLength="7.81" lengthAdjust="spacingAndGlyphs">2</text>
<text x="474.82" y="933.70" font-size="14.5" fill="#222" textLength="8.65" lengthAdjust="spacingAndGlyphs">8</text>
<text x="726.51" y="920.50" font-size="14.5" fill="#222" textLength="13.08" lengthAdjust="spacingAndGlyphs">M</text>
<text x="739.13" y="929.50" font-size="14.5" fill="#222" textLength="7.47" lengthAdjust="spacingAndGlyphs">a</text>
<text x="750.76" y="921.70" font-size="14.5" fill="#222" textLength="8.89" lengthAdjust="spacingAndGlyphs">=</text>
<path d="M764.8,915.3 L845.1,915.3" stroke="#222" stroke-width="1.4"/>
<text x="768.12" y="899.70" font-size="14.5" fill="#222" textLength="10.34" lengthAdjust="spacingAndGlyphs">w</text>
<text x="779.14" y="907.20" font-size="14.5" fill="#222" textLength="7.36" lengthAdjust="spacingAndGlyphs">a</text>
<text x="791.05" y="901.50" font-size="17" fill="#222" textLength="6.10" lengthAdjust="spacingAndGlyphs">*</text>
<text x="800.85" y="899.70" font-size="14.5" fill="#222" textLength="33.48" lengthAdjust="spacingAndGlyphs">Span</text>
<text x="835.09" y="890.20" font-size="14.5" fill="#222" textLength="7.81" lengthAdjust="spacingAndGlyphs">2</text>
<text x="800.82" y="933.70" font-size="14.5" fill="#222" textLength="8.65" lengthAdjust="spacingAndGlyphs">8</text>
<text x="472.31" y="963.80" font-size="14.5" fill="#222" textLength="27.81" lengthAdjust="spacingAndGlyphs">1.74</text>
<text x="507.82" y="951.10" font-size="14.5" fill="#222" textLength="18.59" lengthAdjust="spacingAndGlyphs">kip</text>
<path d="M506.1,959.6 L529,959.6" stroke="#222" stroke-width="1.5"/>
<text x="512.26" y="976.80" font-size="14.5" fill="#222" textLength="9.57" lengthAdjust="spacingAndGlyphs">ft</text>
<text x="535.27" y="965.60" font-size="17" fill="#222" textLength="5.66" lengthAdjust="spacingAndGlyphs">*</text>
<text x="543.87" y="963.80" font-size="14.5" fill="#222" textLength="67.87" lengthAdjust="spacingAndGlyphs">(35 ft 0 in)</text>
<text x="613.10" y="955.20" font-size="14.5" fill="#222" textLength="7.69" lengthAdjust="spacingAndGlyphs">2</text>
<text x="455.89" y="990.50" font-size="14.5" fill="#222" textLength="8.53" lengthAdjust="spacingAndGlyphs">=</text>
<path d="M469.9,984.4 L621.7,984.4" stroke="#222" stroke-width="1.4"/>
<text x="541.59" y="1002.00" font-size="14.5" fill="#222" textLength="9.13" lengthAdjust="spacingAndGlyphs">8</text>
<text x="455.45" y="1020.70" font-size="14.5" fill="#222" textLength="9.02" lengthAdjust="spacingAndGlyphs">=</text>
<text x="467.74" y="1019.50" font-size="14.5" fill="#222" textLength="62.77" lengthAdjust="spacingAndGlyphs">266 kip*ft</text>
<text x="797.31" y="963.80" font-size="14.5" fill="#222" textLength="19.91" lengthAdjust="spacingAndGlyphs">1.2</text>
<text x="824.60" y="951.10" font-size="14.5" fill="#222" textLength="19.03" lengthAdjust="spacingAndGlyphs">kip</text>
<path d="M822,959.6 L844.8,959.6" stroke="#222" stroke-width="1.5"/>
<text x="829.05" y="976.80" font-size="14.5" fill="#222" textLength="9.99" lengthAdjust="spacingAndGlyphs">ft</text>
<text x="851.05" y="965.60" font-size="17" fill="#222" textLength="5.99" lengthAdjust="spacingAndGlyphs">*</text>
<text x="860.35" y="963.80" font-size="14.5" fill="#222" textLength="68.80" lengthAdjust="spacingAndGlyphs">(35 ft 0 in)</text>
<text x="929.69" y="955.20" font-size="14.5" fill="#222" textLength="6.71" lengthAdjust="spacingAndGlyphs">2</text>
<text x="780.89" y="990.50" font-size="14.5" fill="#222" textLength="8.53" lengthAdjust="spacingAndGlyphs">=</text>
<path d="M794.9,984.4 L939.2,984.4" stroke="#222" stroke-width="1.4"/>
<text x="862.13" y="1002.00" font-size="14.5" fill="#222" textLength="9.84" lengthAdjust="spacingAndGlyphs">8</text>
<text x="780.45" y="1020.70" font-size="14.5" fill="#222" textLength="9.02" lengthAdjust="spacingAndGlyphs">=</text>
<text x="793.06" y="1019.50" font-size="14.5" fill="#222" textLength="62.45" lengthAdjust="spacingAndGlyphs">184 kip*ft</text>
</svg>
</body></html>
